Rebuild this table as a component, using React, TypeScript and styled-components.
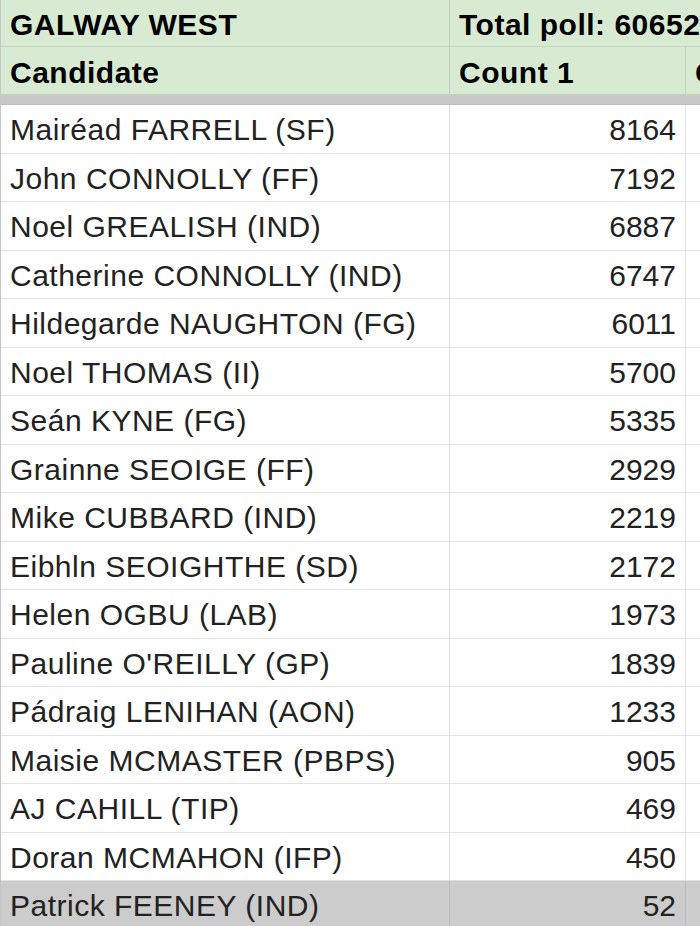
import styled, { createGlobalStyle } from 'styled-components';

const GlobalStyle = createGlobalStyle`
  body {
    margin: 0;
    background: #ffffff;
    overflow: hidden;
    font-family: "Liberation Sans", Arial, sans-serif;
  }
`;

const Sheet = styled.div`
  display: grid;
  grid-template-columns: 449px 236px 240px;
  width: 925px;
  border-left: 1px solid #c6c6c6;
  color: #222222;
  font-size: 30px;
  letter-spacing: 0.5px;
`;

const HeadCell = styled.div<{ $span?: number; $height: number }>`
  grid-column: span ${(p) => p.$span || 1};
  height: ${(p) => p.$height}px;
  box-sizing: border-box;
  display: flex;
  align-items: center;
  padding: 4px 9px 0 9px;
  background: #d9ead3;
  border-right: 1px solid #c3d3bd;
  border-bottom: 1px solid #c3d3bd;
  font-weight: bold;
  color: #000000;
  white-space: nowrap;
  overflow: hidden;
`;

const FreezeBar = styled.div`
  grid-column: 1 / -1;
  height: 10px;
  background: #c8c8c8;
  border-bottom: 1px solid #bdbdbd;
  box-sizing: border-box;
`;

const Cell = styled.div<{ $num?: boolean; $shade?: boolean }>`
  height: 48.5px;
  box-sizing: border-box;
  display: flex;
  align-items: center;
  justify-content: ${(p) => (p.$num ? 'flex-end' : 'flex-start')};
  padding: 3px 9px 0 9px;
  background: ${(p) => (p.$shade ? '#cccccc' : '#ffffff')};
  border-right: 1px solid ${(p) => (p.$shade ? '#bcbcbc' : '#e2e2e2')};
  border-bottom: 1px solid ${(p) => (p.$shade ? '#bcbcbc' : '#e2e2e2')};
  letter-spacing: ${(p) => (p.$num ? '0' : '0.5px')};
  white-space: nowrap;
`;

const rows: [string, number][] = [
  ['Mairéad FARRELL (SF)', 8164],
  ['John CONNOLLY (FF)', 7192],
  ['Noel GREALISH (IND)', 6887],
  ['Catherine CONNOLLY (IND)', 6747],
  ['Hildegarde NAUGHTON (FG)', 6011],
  ['Noel THOMAS (II)', 5700],
  ['Seán KYNE (FG)', 5335],
  ['Grainne SEOIGE (FF)', 2929],
  ['Mike CUBBARD (IND)', 2219],
  ['Eibhln SEOIGHTHE (SD)', 2172],
  ['Helen OGBU (LAB)', 1973],
  ["Pauline O'REILLY (GP)", 1839],
  ['Pádraig LENIHAN (AON)', 1233],
  ['Maisie MCMASTER (PBPS)', 905],
  ['AJ CAHILL (TIP)', 469],
  ['Doran MCMAHON (IFP)', 450],
  ['Patrick FEENEY (IND)', 52],
];

export default function App() {
  return (
    <>
      <GlobalStyle />
      <Sheet>
        <HeadCell $height={47}>GALWAY WEST</HeadCell>
        <HeadCell $height={47} $span={2}>Total poll: 60652</HeadCell>
        <HeadCell $height={48}>Candidate</HeadCell>
        <HeadCell $height={48}>Count 1</HeadCell>
        <HeadCell $height={48}>Count 2</HeadCell>
        <FreezeBar />
        {rows.map(([name, votes], i) => {
          const shade = i === rows.length - 1;
          return [
            <Cell key={name} $shade={shade}>{name}</Cell>,
            <Cell key={name + 'n'} $num $shade={shade}>{votes}</Cell>,
            <Cell key={name + 'e'} $shade={shade} />,
          ];
        })}
      </Sheet>
    </>
  );
}
